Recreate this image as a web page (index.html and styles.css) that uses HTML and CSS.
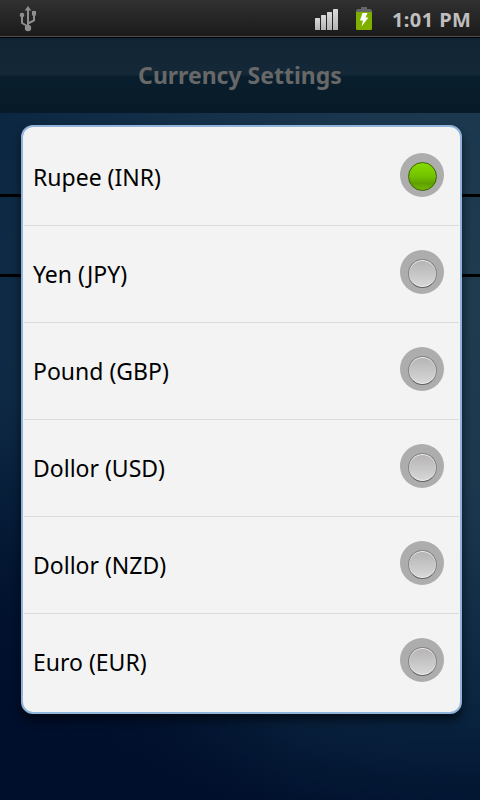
FILE: index.html
```html
<!DOCTYPE html>
<html lang="en">
<head>
    <meta charset="UTF-8">
    <meta name="viewport" content="width=device-width, initial-scale=1.0">
    <title>Currency Settings</title>
    <link rel="stylesheet" href="styles.css">
</head>
<body>
    <div class="statusbar">
        <svg class="usb" width="18" height="26" viewBox="0 0 18 26">
            <path d="M9 22V4M9 20.500L3 17V9M9 17.500L15 14.500V8" fill="none" stroke="#8e8e8e" stroke-width="2"/>
            <path d="M9 0L12.300 4.500H5.700Z" fill="#8e8e8e"/>
            <circle cx="9" cy="22" r="3.200" fill="#8e8e8e"/>
            <circle cx="3" cy="9" r="2.300" fill="#8e8e8e"/>
            <rect x="13" y="5" width="4" height="4.500" fill="#8e8e8e"/>
        </svg>
        <svg class="signal" width="24" height="22" viewBox="0 0 24 22">
            <defs>
                <linearGradient id="bar" x1="0" y1="0" x2="0" y2="1">
                    <stop offset="0" stop-color="#dadada"/>
                    <stop offset="1" stop-color="#b4b4b4"/>
                </linearGradient>
            </defs>
            <g fill="url(#bar)">
                <rect x="0" y="9" width="5" height="12" rx="0.5"/>
                <rect x="6" y="6" width="5" height="15" rx="0.5"/>
                <rect x="12" y="3" width="5" height="18" rx="0.5"/>
                <rect x="18" y="0" width="5" height="21" rx="0.5"/>
            </g>
        </svg>
        <svg class="battery" width="16" height="23" viewBox="0 0 16 23">
            <path d="M5 0H11V2H14.500L16 3.500V5H0V3.500L1.500 2H5Z" fill="#666"/>
            <path d="M0 5H16V21.500Q16 23 14.500 23H1.500Q0 23 0 21.500Z" fill="#7fb000"/>
            <path d="M6.500 6H11.500L9.500 10.500H12.500L5.500 19.500L7 13.500H4Z" fill="#fff"/>
        </svg>
        <span class="clock">1:01 PM</span>
    </div>

    <header>
        <h1>Currency Settings</h1>
    </header>

    <div class="content">
        <div class="line"></div>
        <div class="line"></div>
    </div>

    <div class="dialog">
        <ul>
            <li>Rupee (INR) <span class="radio checked"></span></li>
            <li>Yen (JPY) <span class="radio"></span></li>
            <li>Pound (GBP) <span class="radio"></span></li>
            <li>Dollor (USD) <span class="radio"></span></li>
            <li>Dollor (NZD) <span class="radio"></span></li>
            <li>Euro (EUR) <span class="radio"></span></li>
        </ul>
    </div>
</body>
</html>
```
FILE: styles.css
```css
* {
    margin: 0;
    padding: 0;
    box-sizing: border-box;
    font-family: "Noto Sans", "Open Sans", sans-serif;
}

body {
    position: relative;
    width: 480px;
    height: 800px;
    overflow: hidden;
    background:
        radial-gradient(ellipse 300px 400px at 0 800px, rgba(0, 15, 44, 0.9) 0%, rgba(0, 15, 44, 0.7) 50%, rgba(0, 15, 44, 0) 100%),
        radial-gradient(ellipse 720px 530px at 480px 300px, #1f3b4f 0%, #1c384f 35%, #0b2641 75%, #00102d 100%);
}

.statusbar {
    display: flex;
    align-items: flex-start;
    height: 38px;
    padding-left: 19px;
    background: linear-gradient(to bottom, #313131 0%, #1a1a1a 100%);
    border-bottom: 1px solid #000;
    box-shadow: inset 0 -1px 0 #4d4d4d;
}

.usb {
    margin-top: 6px;
}

.signal {
    margin: 9px 17px 0 278px;
}

.battery {
    margin-top: 7px;
}

.clock {
    margin-left: 20px;
    font-size: 20px;
    font-weight: bold;
    letter-spacing: 0.4px;
    line-height: 40px;
    color: #bebebe;
    white-space: nowrap;
}

header {
    height: 75px;
    background: linear-gradient(to bottom, #102433 0%, #142837 48%, #091e2d 52%, #071a27 100%);
}

h1 {
    font-size: 23px;
    line-height: 75px;
    text-align: center;
    color: #686868;
}

.content {
    padding-top: 81px;
}

.line {
    height: 3px;
    margin-bottom: 77px;
    background-color: #000;
}

/* popup with the list of currencies */
.dialog {
    position: absolute;
    top: 125px;
    left: 21px;
    width: 441px;
    height: 589px;
    padding: 2px 1px;
    background-color: #f3f3f3;
    border: 2px solid #8fb3d9;
    border-radius: 12px;
    box-shadow: 0 6px 10px rgba(0, 0, 0, 0.6);
}

ul {
    list-style: none;
}

li {
    display: flex;
    align-items: center;
    justify-content: space-between;
    height: 97px;
    padding: 0 15px 0 9px;
    border-bottom: 1px solid #dadada;
    font-size: 23px;
    color: #000;
}

li:last-child {
    border-bottom-color: transparent;
}

.radio {
    display: flex;
    align-items: center;
    justify-content: center;
    width: 44px;
    height: 44px;
    padding-top: 2px;
    margin-bottom: 4px;
    border-radius: 50%;
    background-color: #adadad;
}

.radio::before {
    content: "";
    width: 27px;
    height: 27px;
    border: 1px solid #858585;
    border-bottom-color: #606060;
    border-radius: 50%;
    background: linear-gradient(to bottom, #b5b3b3, #d8d8d8);
    box-shadow: inset 0 1px 0 #f0f0f0, inset 0 -1px 0 #f0f0f0;
}

.checked::before {
    border-color: #3c6208;
    background: linear-gradient(to bottom, #86dc00 0%, #73c200 50%, #5fa000 75%, #72b800 100%);
    box-shadow: none;
}
```
